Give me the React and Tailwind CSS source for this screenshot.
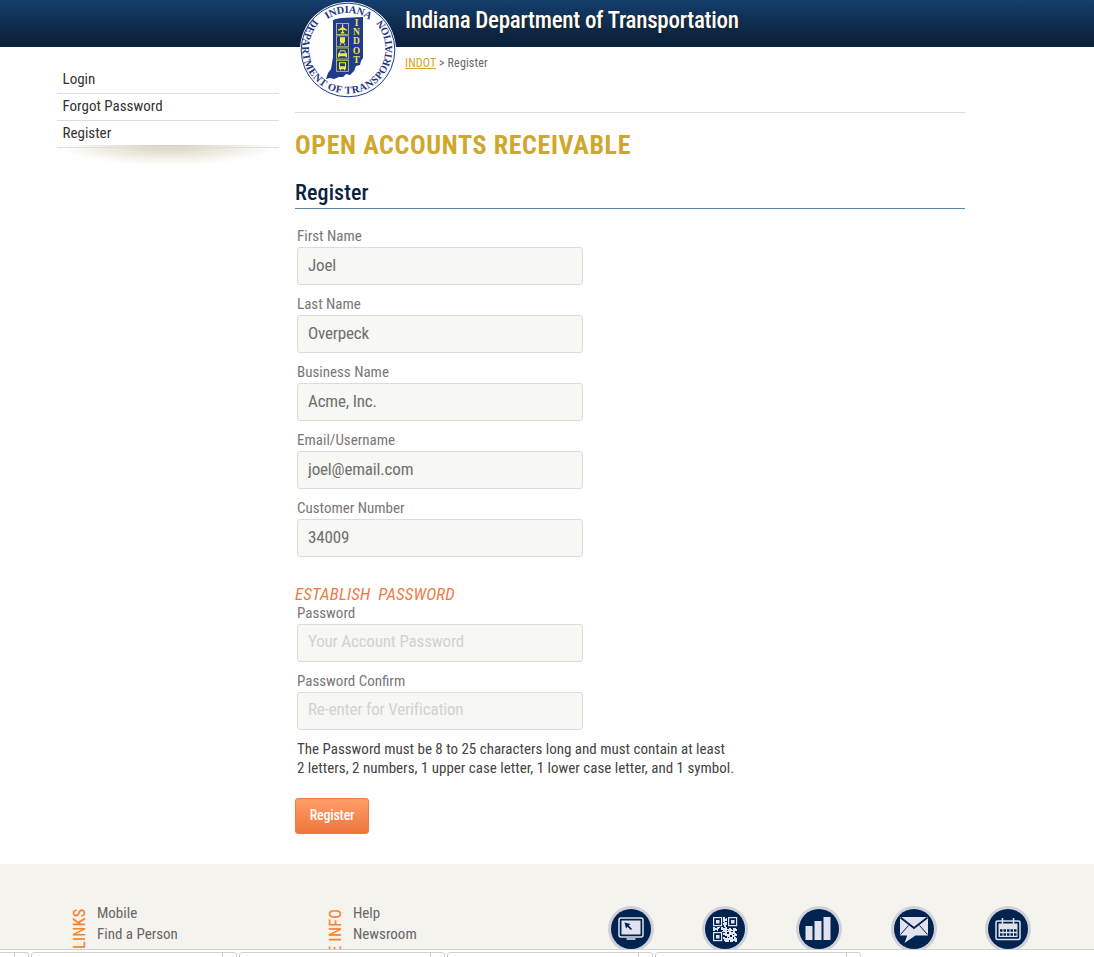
const icons = {
  monitor: (
    <g>
      <rect x="11" y="12" width="24" height="19" rx="2" fill="none" stroke="#e1e2ee" strokeWidth="1.5" />
      <rect x="13.500" y="14.500" width="19" height="14" fill="#e1e2ee" />
      <path d="M16.500 16.500l6 1.600-1.800 1.400 3.400 3.400-1.300 1.200-3.300-3.400-1.400 1.800z" fill="#00244f" />
      <path d="M18.500 33h9" stroke="#aeb7cb" strokeWidth="2" />
    </g>
  ),
  qr: (
    <g fill="#e1e2ee">
      <g fill="none" stroke="#e1e2ee" strokeWidth="1.200">
        <rect x="11.600" y="11.600" width="8" height="8" />
        <rect x="26.600" y="11.600" width="8" height="8" />
        <rect x="11.600" y="26.600" width="8" height="8" />
      </g>
      <rect x="14" y="14" width="3.500" height="3.500" />
      <rect x="29" y="14" width="3.500" height="3.500" />
      <rect x="14" y="29" width="3.500" height="3.500" />
      <path d="M21 11h2v2h1v-1h1v3h-2v1h2v3h-1v2h-2v-2h-1v-2h1v-1h-1zM11 21h2v1h2v-1h3v1h-1v1h-1v2h-1v-1h-2v1h-2zM19 21h2v1h2v-1h2v2h2v-1h2v1h1v1h1v-2h3v1h1v2h-2v2h1v1h1v2h-2v1h1v1h1v4h-2v-1h-2v1h-3v-2h-1v2h-4v-1h-1v-2h-1v-2h2v-2h-2v-2h2v-1h-3v-1h1v-1h-2zM25 26v2h2v-2zM28 29v2h2v-2zM23 30v2h2v-2zM29 25v1h2v-1zM25 24v1h1v-1zM31 28v1h1v-1zM31 31v2h1v-2zM26 31v1h1v-1z" fillRule="evenodd" />
    </g>
  ),
  bars: <path d="M9.500 20h7v14h-7zM18.500 15h7v19h-7zM27.500 11h7v23h-7z" fill="#e1e2ee" />,
  mail: (
    <g>
      <path d="M9 11h28v18.500H24.500L13.500 37l2.700-7.500H9z" fill="#e1e2ee" />
      <path d="M9.500 11.500L23 22l13.500-10.500" fill="none" stroke="#00244f" strokeWidth="1.800" />
      <path d="M9.500 28.500l8-9M36.500 28.500l-8-9" stroke="#00244f" strokeWidth="1" />
    </g>
  ),
  calendar: (
    <g>
      <rect x="11" y="15" width="24" height="18.500" rx="1.500" fill="none" stroke="#e1e2ee" strokeWidth="1.500" />
      <path d="M17.500 12v6M28.500 12v6" stroke="#e1e2ee" strokeWidth="1.500" />
      <path d="M13.500 17.500h19v13.500h-19z" fill="#e1e2ee" />
      <path d="M15 24.500h16.500M15 28.500h16.500" stroke="#00244f" strokeWidth="2.600" strokeDasharray="2.500 1" />
    </g>
  ),
};

function RoundIcon({ name }) {
  return (
    <svg width="46" height="46" viewBox="0 0 46 46" className="block">
      <circle cx="23" cy="23" r="23" fill="#d0d0db" />
      <circle cx="23" cy="23" r="20" fill="#00244f" />
      {icons[name]}
    </svg>
  );
}

function Seal() {
  return (
    <svg width="98" height="98" viewBox="0 0 98 98" className="block">
      <defs>
        <path id="arcTop" d="M12 49a37 37 0 0 1 74 0" />
        <path id="arcBottom" d="M14.300 18A45 45 0 1 0 84.500 21" />
      </defs>
      <circle cx="49" cy="49" r="48" fill="#fff" />
      <circle cx="49" cy="49" r="46.800" fill="none" stroke="#203a8c" strokeWidth="1" />
      <g fill="#1d3583" fontFamily="Liberation Serif, serif" fontWeight="700" fontSize="10.500">
        <text>
          <textPath href="#arcTop" startOffset="36" textLength="45">INDIANA</textPath>
        </text>
        <text>
          <textPath href="#arcBottom" textLength="205">DEPARTMENT OF TRANSPORTATION</textPath>
        </text>
      </g>
      <path d="M34 19l3-1 5-1 22-1v41l-2 3-1 4-4 1-2 5-4 4-4-1-3 3-4 0-5 2-4-1-4 1 2-6 3-4 1-6 1-6z" fill="#203a8c" />
      <g fill="none" stroke="#d7d05c" strokeWidth=".8">
        <rect x="37.500" y="22.500" width="12" height="11" />
        <rect x="37.500" y="34.800" width="12" height="11" />
        <rect x="37.500" y="47" width="12" height="11" />
        <rect x="37.500" y="59.300" width="12" height="11" />
      </g>
      <g fill="#f2e73b" transform="translate(1 .3)">
        <path d="M42 23h1.200v3l4 2.500v1l-4-1v2l1.300 1v.6h-3.800v-.6l1.300-1v-2l-4 1v-1l4-2.500z" />
        <path d="M40 36h5v5h-1l1.500 3h-1l-1-2h-2l-1 2h-1l1.500-3h-1z" />
        <path d="M40 49h5l1 3h1v4h-1.500v-1h-6v1H38v-4h1z" />
        <path d="M39 61h7v7h-1v1h-1v-1h-3v1h-1v-1h-1z" />
      </g>
      <path d="M41.500 50.300h4l.5 2h-5zM41 62.300h5v3h-5z" fill="#203a8c" />
      <g fill="#f2e73b" fontFamily="Liberation Serif, serif" fontWeight="700" fontSize="9.500" textAnchor="middle">
        <text x="57.500" y="25">I</text>
        <text x="57.500" y="34.200">N</text>
        <text x="57.500" y="43.400">D</text>
        <text x="57.500" y="52.600">O</text>
        <text x="57.500" y="61.800">T</text>
      </g>
    </svg>
  );
}

function Field({ label, value, placeholder }) {
  return (
    <div className="ml-[2px] h-[68px]">
      <label className="block h-[20px] text-[15px] leading-[19px] text-[#777]">{label}</label>
      <input
        className="block h-[38px] w-[286px] rounded-[3px] border border-[#dcdcdc] bg-[#f7f7f3] px-[10px] pb-[2px] text-[17px] tracking-[-0.17px] text-[#6f6f6f] outline-none placeholder:text-[#d2d2d2] placeholder-shown:pb-[4px]"
        defaultValue={value}
        placeholder={placeholder}
      />
    </div>
  );
}

function FooterLinks({ title, links }) {
  return (
    <div className="flex w-[256px] shrink-0">
      <div className="h-[46px] w-[24px]">
        <div className="ml-[-3px] mt-[6px] h-[100px] w-[20px] rotate-180 whitespace-nowrap text-right text-[16px] leading-[20px] tracking-[0.35px] text-[#f5842a] [writing-mode:vertical-rl] [-webkit-text-stroke:0.2px_#f5842a]">
          {title}
        </div>
      </div>
      <div className="text-[15px] leading-[21px] text-[#666]">
        {links.map((l) => (
          <div key={l}>{l}</div>
        ))}
      </div>
    </div>
  );
}

export default function App() {
  return (
    <div className="flex h-[957px] w-[1094px] flex-col overflow-hidden bg-white [font-family:'Roboto_Condensed',Roboto,sans-serif] [font-stretch:75%]">
      <header className="relative h-[47px] shrink-0 bg-linear-to-b from-[#143f6d] to-[#0c233f] to-80% pl-[405px]">
        <div className="absolute left-[299px] top-[1px] z-10">
          <Seal />
        </div>
        <h1 className="whitespace-nowrap pt-[1px] text-[23px] font-medium leading-[40px] tracking-[-0.28px] text-white [text-shadow:1px_1px_2px_#222]">
          Indiana Department of Transportation
        </h1>
      </header>
      <div className="flex h-[817px] shrink-0 pl-[57px]">
        <nav className="w-[222px] shrink-0 pt-[20px] text-[15px] text-[#333]">
          <div className="h-[27px] border-b border-[#ddd] pl-[5.5px] leading-[25px]">Login</div>
          <div className="h-[27px] border-b border-[#ddd] pl-[5.5px] leading-[25px]">Forgot Password</div>
          <div className="h-[24px] pl-[5.5px] leading-[25px]">Register</div>
          <div className="h-[20px] bg-[radial-gradient(ellipse_50%_100%_at_50%_0,#d8d3bf,#e4e0d0_35%,#f3f1ea_70%,transparent)]">
            <div className="h-[3px] border-b border-[#ddd]" />
          </div>
        </nav>
        <main className="ml-[16px] w-[670px] shrink-0">
          <div className="h-[66px] border-b border-[#ddd] pl-[110px] pt-[8px] text-[12px] leading-[16px] tracking-[0.15px] text-[#666]">
            <a className="text-[#cfa52b] underline">INDOT</a> &gt; Register
          </div>
          <h2 className="h-[62px] pt-[16px] text-[26px] font-bold leading-[32px] tracking-[0.62px] text-[#cfa72c]">
            OPEN ACCOUNTS RECEIVABLE
          </h2>
          <h3 className="h-[34px] border-b border-[#6284a4] text-[22px] font-medium leading-[35px] tracking-[0.1px] text-[#0c2340]">
            Register
          </h3>
          <div className="pt-[18px]">
            <Field label="First Name" value="Joel" />
            <Field label="Last Name" value="Overpeck" />
            <Field label="Business Name" value="Acme, Inc." />
            <Field label="Email/Username" value="joel@email.com" />
            <Field label="Customer Number" value="34009" />
          </div>
          <div className="whitespace-pre pt-[17px] text-[17px] italic leading-[20px] tracking-[0.15px] text-[#ee7b45]">
            ESTABLISH  PASSWORD
          </div>
          <Field label="Password" placeholder="Your Account Password" />
          <Field label="Password Confirm" placeholder="Re-enter for Verification" />
          <p className="ml-[2px] text-[15px] leading-[19px] text-[#444]">
            The Password must be 8 to 25 characters long and must contain at least
            <br />
            2 letters, 2 numbers, 1 upper case letter, 1 lower case letter, and 1 symbol.
          </p>
          <button className="mt-[20px] block h-[36px] w-[74px] rounded-[3px] border border-[#ee7a43] bg-linear-to-b from-[#ff9e68] to-[#ee753b] pb-[2px] text-[14px] font-medium tracking-[-0.2px] text-white">
            Register
          </button>
        </main>
      </div>
      <footer className="flex h-[85px] shrink-0 overflow-hidden bg-[#f4f3ee] pl-[73px] pt-[39px]">
        <FooterLinks title="LINKS" links={["Mobile", "Find a Person"]} />
        <FooterLinks title="MORE INFO" links={["Help", "Newsroom"]} />
        <div className="ml-[23px] mt-[3px] flex gap-[48.2px]">
          {["monitor", "qr", "bars", "mail", "calendar"].map((n) => (
            <RoundIcon key={n} name={n} />
          ))}
        </div>
      </footer>
      <div className="flex h-[8px] shrink-0 gap-[2px] overflow-hidden border-t border-[#d0d0d0] bg-white pt-[2px]">
        <div className="flex h-[20px] w-[29px] shrink-0 justify-end rounded-tr-[3px] border-r border-t border-[#d0d0d0]">
          <div className="w-[14px] border-l border-[#d0d0d0]" />
        </div>
        {[0, 1, 2, 3].map((i) => (
          <div key={i} className="flex h-[20px] w-[206px] shrink-0 justify-end rounded-t-[3px] border border-[#d0d0d0]">
            <div className="w-[14px] border-l border-[#d0d0d0]" />
          </div>
        ))}
      </div>
    </div>
  );
}
